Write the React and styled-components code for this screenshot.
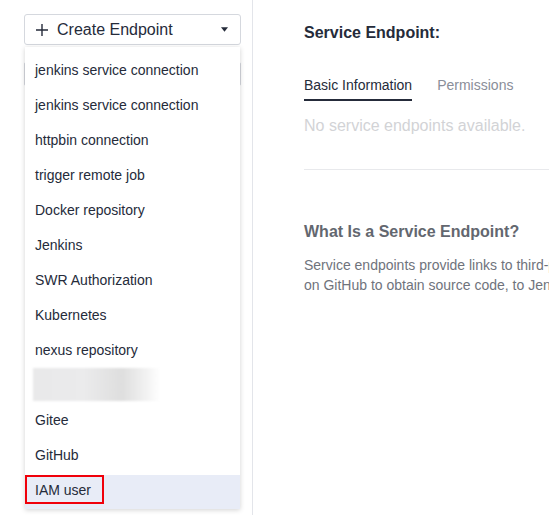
import React from "react";
import styled, { createGlobalStyle } from "styled-components";

const Global = createGlobalStyle`
  html, body {
    margin: 0;
    padding: 0;
    background: #fff;
    font-family: "Liberation Sans", Arial, sans-serif;
    overflow: hidden;
  }
`;

const items = [
  "jenkins service connection",
  "jenkins service connection",
  "httpbin connection",
  "trigger remote job",
  "Docker repository",
  "Jenkins",
  "SWR Authorization",
  "Kubernetes",
  "nexus repository",
  null,
  "Gitee",
  "GitHub",
  "IAM user",
];

function App() {
  return (
    <Page>
      <Global />
      <Sidebar>
        <Dropdown>
          <CreateButton>
            <Plus viewBox="0 0 14 14">
              <path d="M7 1v12M1 7h12" stroke="#252b3a" strokeWidth="1.4" />
            </Plus>
            <span>Create Endpoint</span>
            <Caret viewBox="0 0 8 5">
              <path d="M0 0h8L4 5z" fill="#252b3a" />
            </Caret>
          </CreateButton>
          <Menu>
            {items.map((it, i) =>
              it === null ? (
                <MenuItem key={i}>
                  <Blurred />
                </MenuItem>
              ) : (
                <MenuItem key={i} $active={it === "IAM user"}>
                  {it === "IAM user" ? <Marked>{it}</Marked> : it}
                </MenuItem>
              )
            )}
          </Menu>
        </Dropdown>
        <SearchBox />
      </Sidebar>
      <Main>
        <Title>Service Endpoint:</Title>
        <Tabs>
          <Tab $active>Basic Information</Tab>
          <Tab>Permissions</Tab>
        </Tabs>
        <Empty>No service endpoints available.</Empty>
        <Divider />
        <Heading>What Is a Service Endpoint?</Heading>
        <Para>
          Service endpoints provide links to third-party services, for example,
          on GitHub to obtain source code, to Jenkins to run jobs.
        </Para>
      </Main>
    </Page>
  );
}

const Page = styled.div`
  display: flex;
  width: 549px;
  height: 515px;
  overflow: hidden;
`;

const Sidebar = styled.div`
  width: 253px;
  flex-shrink: 0;
  box-sizing: border-box;
  padding: 14px 12px 0 24px;
  border-right: 1px solid #e3e5ea;
`;

const Dropdown = styled.div`
  position: relative;
  z-index: 2;
`;

const CreateButton = styled.div`
  box-sizing: border-box;
  height: 31px;
  width: 217px;
  border: 1px solid #d5d8de;
  border-radius: 3px;
  display: flex;
  align-items: center;
  padding: 0 12px 0 10px;
  font-size: 16px;
  color: #252b3a;
  span {
    margin-left: 8px;
    flex: 1;
  }
`;

const Plus = styled.svg`
  width: 14px;
  height: 14px;
`;

const Caret = styled.svg`
  width: 7px;
  height: 5px;
`;

const Menu = styled.div`
  position: absolute;
  top: 33px;
  left: 1px;
  width: 215px;
  padding-top: 5px;
  background: #fff;
  box-shadow: 0 1px 5px rgba(0, 0, 0, 0.18);
`;

const MenuItem = styled.div`
  height: 35px;
  display: flex;
  align-items: center;
  padding-left: 10px;
  font-size: 14px;
  color: #252b3a;
  background: ${(p) => (p.$active ? "#e8ecf7" : "transparent")};
  ${(p) => p.$active && "margin-top: 3px; height: 34px; align-items: flex-start;"}
`;

const Marked = styled.span`
  box-sizing: border-box;
  margin-left: -10px;
  width: 79px;
  height: 29px;
  padding: 5px 0 0 8px;
  border: 2px solid #f0000a;
  line-height: 16px;
`;

const Blurred = styled.div`
  margin-left: -2px;
  width: 127px;
  height: 33px;
  background: linear-gradient(
    90deg,
    #e9e9ea 0%,
    #ebebec 40%,
    #dedede 70%,
    #f3f3f3 90%,
    #ffffff 100%
  );
  filter: blur(1px);
`;

const SearchBox = styled.div`
  box-sizing: border-box;
  margin-top: 17px;
  height: 24px;
  width: 217px;
  border: 1px solid #d5d8de;
  border-radius: 2px;
`;

const Main = styled.div`
  flex: 1;
  padding: 24px 0 0 51px;
  min-width: 0;
  overflow: hidden;
`;

const Title = styled.div`
  font-size: 16px;
  font-weight: bold;
  color: #252b3a;
  line-height: 18px;
`;

const Tabs = styled.div`
  display: flex;
  gap: 25px;
  margin-top: 35px;
`;

const Tab = styled.div`
  font-size: 14px;
  line-height: 16px;
  padding-bottom: 6px;
  color: ${(p) => (p.$active ? "#252b3a" : "#8a8e99")};
  border-bottom: 2px solid ${(p) => (p.$active ? "#252b3a" : "transparent")};
`;

const Empty = styled.div`
  margin-top: 16px;
  font-size: 16px;
  line-height: 18px;
  color: #d2d3d6;
`;

const Divider = styled.div`
  margin-top: 34px;
  height: 1px;
  background: #e8e9ec;
`;

const Heading = styled.div`
  margin-top: 53px;
  font-size: 16px;
  font-weight: bold;
  color: #63676f;
  line-height: 18px;
`;

const Para = styled.div`
  margin-top: 14px;
  font-size: 14px;
  line-height: 20px;
  color: #6f737c;
  width: 420px;
`;

export default App;
